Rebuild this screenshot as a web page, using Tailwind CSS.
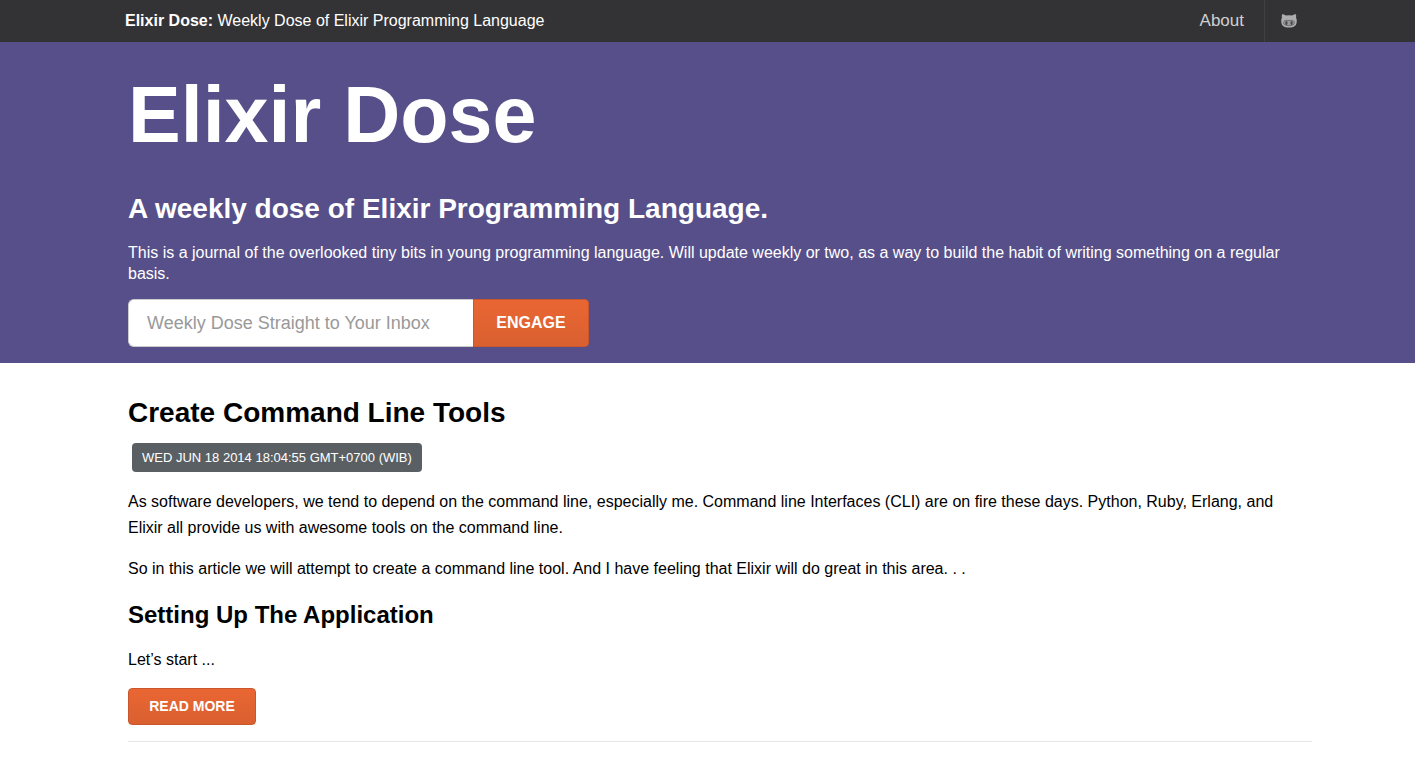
<!DOCTYPE html>
<html lang="en">
<head>
<meta charset="utf-8">
<meta name="viewport" content="width=device-width, initial-scale=1">
<title>Elixir Dose</title>
<script src="https://cdn.jsdelivr.net/npm/@tailwindcss/browser@4"></script>
</head>
<body class="bg-white text-black font-['Liberation_Sans',Arial,sans-serif] text-base">
<nav class="bg-[#333335] text-white">
  <div class="flex h-[42px] items-center justify-between pl-[125px] pr-[102px]">
    <a href="#"><strong>Elixir Dose:</strong> Weekly Dose of Elixir Programming Language</a>
    <div class="flex h-full items-center">
      <a href="#" class="pr-5 text-[17px] text-[#cfcfcf]">About</a>
      <a href="#" aria-label="GitHub" class="flex h-full items-center border-l border-[#404042] pl-4 pr-4">
        <svg viewBox="0 0 16 14" class="h-[14px] w-4">
          <path fill="#adadaf" d="M1.200.3C2.600.3 3.900 1 4.800 1.600a20 20 0 0 1 6.400 0C12.100 1 13.400.3 14.800.3c.5 1.200.5 2.400.2 3.400.5.8.8 1.800.8 3C15.800 11.900 13 13.500 8 13.500S.2 11.900.2 6.700c0-1.200.3-2.200.8-3C.7 2.700.7 1.500 1.200.3z"/>
          <path fill="#9b9b9d" stroke="#656568" stroke-width=".8" d="M5 6.300c1 0 1.900.2 3 .2s2-.2 3-.2c1.500 0 2.400 1 2.400 2.400 0 2.300-2.200 2.900-5.400 2.900s-5.400-.6-5.400-2.900C2.600 7.300 3.500 6.300 5 6.300z"/>
          <ellipse cx="5.400" cy="8.900" rx="1.200" ry="2" fill="#4a4a4d"/>
          <ellipse cx="10.600" cy="8.900" rx="1.200" ry="2" fill="#4a4a4d"/>
        </svg>
      </a>
    </div>
  </div>
</nav>
<header class="bg-[#574f89] pl-32 pr-[103px] pb-4 pt-[29px] text-white">
  <h1 class="text-[79px] leading-[88px] font-bold">Elixir Dose</h1>
  <h2 class="mt-8 text-[28px] leading-9 font-bold">A weekly dose of Elixir Programming Language.</h2>
  <p class="mt-[15px] leading-[21px]">This is a journal of the overlooked tiny bits in young programming language. Will update weekly or two, as a way to build the habit of writing something on a regular basis.</p>
  <form class="mt-[15px] flex h-12">
    <input type="email" aria-label="Email" placeholder="Weekly Dose Straight to Your Inbox" class="w-[345px] rounded-l-md border border-r-0 border-[#cccccc] bg-white px-[18px] text-lg text-black placeholder:text-[#999]">
    <button type="button" class="w-[116px] rounded-r border border-[#c9562c] bg-linear-to-b from-[#e96633] to-[#da6030] font-bold">ENGAGE</button>
  </form>
</header>
<main class="pl-32 pr-[103px]">
  <article class="border-b border-[#e5e5e5] pb-4 pt-8">
    <h2 class="text-[28px] leading-9 font-bold">Create Command Line Tools</h2>
    <time class="ml-1 mt-3 block w-fit rounded bg-[#5a5f63] px-2.5 text-[13px] leading-[29px] text-white">WED JUN 18 2014 18:04:55 GMT+0700 (WIB)</time>
    <p class="mt-[17px] leading-[26px]">As software developers, we tend to depend on the command line, especially me. Command line Interfaces (CLI) are on fire these days. Python, Ruby, Erlang, and Elixir all provide us with awesome tools on the command line.</p>
    <p class="mt-[15px] leading-[26px]">So in this article we will attempt to create a command line tool. And I have feeling that Elixir will do great in this area. . .</p>
    <h3 class="mt-[17px] text-2xl font-bold">Setting Up The Application</h3>
    <p class="mt-4 leading-[26px]">Let’s start ...</p>
    <a href="#" class="mt-[15px] block w-[128px] rounded-sm border border-[#c9562c] bg-linear-to-b from-[#e96633] to-[#da6030] text-center text-sm leading-[35px] font-bold text-white">READ MORE</a>
  </article>
</main>
</body>
</html>
